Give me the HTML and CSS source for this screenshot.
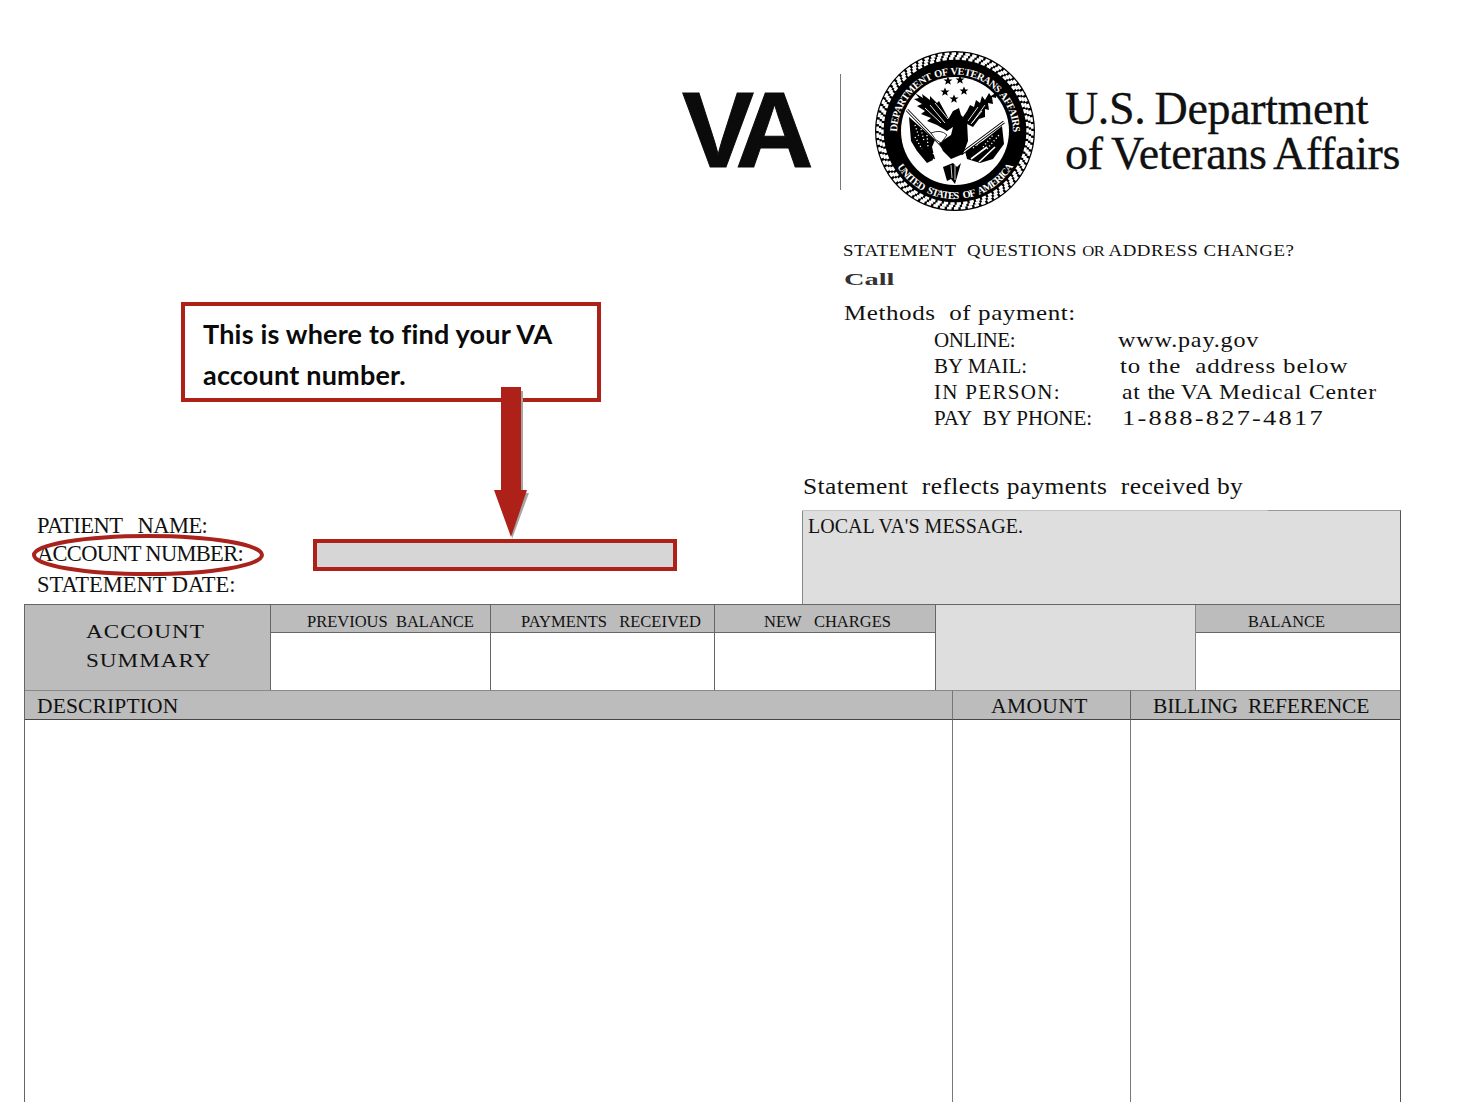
FILE: index.html
```html
<!DOCTYPE html>
<html>

<head>
    <meta charset="UTF-8">
    <title>VA statement: account number</title>
    <link rel="stylesheet" href="styles.css">
</head>

<body>
    <div class="page">
        <header class="letterhead">
            <div class="va-mark">VA</div>
            <div class="va-rule"></div>
            <svg class="seal" viewBox="0 0 160 160" width="160" height="160" role="img" aria-label="Seal">
                <defs>
                    <path id="arc-top" d="M25 100 A58 58 0 1 1 135 100" fill="none" />
                    <path id="arc-bottom" d="M12 80 A68 68 0 0 0 148 80" fill="none" />
                    <path id="star" d="M0 -4.6 L1.3 -1.4 4.5 -1.4 1.9 .6 2.8 3.8 0 1.9 -2.8 3.8 -1.9 .6 -4.5 -1.4 -1.3 -1.4Z" />
                </defs>
                <circle cx="80" cy="80" r="80" fill="#000" />
                <!-- rope: three rings of ticks, each a bit further round -->
                <circle class="rope" cx="80" cy="80" r="77.4" pathLength="490" />
                <circle class="rope" cx="80" cy="80" r="75" pathLength="490" stroke-dashoffset="1.5" />
                <circle class="rope" cx="80" cy="80" r="72.6" pathLength="490" stroke-dashoffset="3" />
                <circle cx="80" cy="80" r="54" fill="#fff" />
                <text class="seal-text seal-top"><textPath href="#arc-top" startOffset="50%" text-anchor="middle">DEPARTMENT OF VETERANS AFFAIRS</textPath></text>
                <text class="seal-text seal-bottom"><textPath href="#arc-bottom" startOffset="50%" text-anchor="middle">UNITED STATES OF AMERICA</textPath></text>
                <use href="#star" x="73" y="30" />
                <use href="#star" x="85" y="29" />
                <use href="#star" x="70" y="41" />
                <use href="#star" x="89" y="40" />
                <use href="#star" x="79" y="48" />
                <!-- wings -->
                <path d="M40 42 L48 47 L47 43 L55 49 L55 45 L62 52 L64 50 L76 72 L72 80 L62 74 L52 70 L56 67 L46 63 L50 60 L42 55 L47 53 L39 48 L44 47Z" />
                <path d="M122 41 L121 47 L117 46 L118 53 L113 52 L114 59 L110 58 L110 66 L104 68 L98 76 L90 72 L88 66 L92 60 L95 54 L99 56 L101 49 L105 52 L107 45 L110 49 L114 42 L116 45Z" />
                <path d="M55 54 L70 72 M60 52 L73 68 M50 57 L66 72 M103 56 L93 70 M110 54 L97 72 M107 60 L96 73" stroke="#fff" stroke-width=".9" fill="none" />
                <!-- flags -->
                <path d="M34 66 L60 89 L57 96 L60 108 L52 112 L42 100 L36 90Z" />
                <path d="M127 75 L129 93 L118 108 L105 112 L92 108 L90 100 L108 90Z" />
                <path d="M60 96 L76 110 M58 102 L72 114 M58 108 L68 116 M96 108 L112 96 M104 111 L120 96" stroke="#fff" stroke-width="1.6" fill="none" />
                <path d="M40 74 L44 86 M46 78 L49 90 M40 86 L47 98 M52 84 L53 96 M102 94 L110 86 M108 96 L118 84 M112 98 L124 84 M98 97 L106 90" stroke="#fff" stroke-width="1.3" stroke-dasharray="1.2 2.2" fill="none" />
                <!-- poles -->
                <path d="M32 59 L72 100 M129 71 L86 103" stroke="#000" stroke-width="3" fill="none" />
                <path d="M32 59 L72 100 M129 71 L86 103" stroke="#fff" stroke-width="1.2" fill="none" />
                <!-- body, tail -->
                <path d="M78 60 L84 57 L86 64 L92 70 L93 90 L88 103 L76 108 L68 100 L64 92 L76 84 L78 76 L72 80 L70 74Z" />
                <path d="M56 82 Q66 78 72 84 L66 92 Q60 90 56 82Z" fill="#fff" stroke="#000" stroke-width=".8" />
                <path d="M68 116 L78 112 L82 116 L86 112 L80 133 L76 128 L72 130Z" />
                <path d="M76 114 L77 127 M80 114 L80 129" stroke="#fff" stroke-width=".8" fill="none" />
            </svg>
            <div class="dept">
                <div>U.S. Department</div>
                <div>of Veterans Affairs</div>
            </div>
        </header>

        <div class="info">
            <div class="info-left">
                <div class="callout">
                    This is where to find your VA<br>account number.
                </div>
                <div class="patient">
                    <div class="patient-labels">
                        <div class="name-label">PATIENT&nbsp;&nbsp; NAME:</div>
                        <div class="account-label">ACCOUNT NUMBER:</div>
                        <div class="date-label">STATEMENT DATE:</div>
                    </div>
                    <div class="account-box"></div>
                </div>
            </div>

            <div class="info-right">
                <div class="questions">STATEMENT&nbsp; QUESTIONS <span class="small-or">OR</span> ADDRESS CHANGE?</div>
                <div class="call">Call</div>
                <div class="methods-title">Methods&nbsp; of payment:</div>
                <div class="methods">
                    <span>ONLINE:</span><span class="value value-online">www.pay.gov</span>
                    <span class="label-mail">BY MAIL:</span><span class="value value-mail">to the&nbsp; address below</span>
                    <span class="label-person">IN PERSON:</span><span class="value value-person">at <span class="thin">the</span> VA Medical Center</span>
                    <span class="label-phone">PAY&nbsp; BY PHONE:</span><span class="value value-phone">1-888-827-4817</span>
                </div>
                <div class="reflects">Statement&nbsp; reflects payments&nbsp; received by</div>
                <div class="message">LOCAL VA'S MESSAGE.</div>
            </div>
        </div>

        <div class="summary">
            <div class="sum-title"><div class="sum-words">ACCOUNT<br>SUMMARY</div></div>
            <div class="sum-head sum-prev">PREVIOUS&nbsp; BALANCE</div>
            <div class="sum-head sum-pay">PAYMENTS&nbsp;&nbsp; RECEIVED</div>
            <div class="sum-head sum-new">NEW&nbsp;&nbsp; CHARGES</div>
            <div class="sum-blank"></div>
            <div class="sum-head sum-bal">BALANCE</div>
            <div class="sum-cell"></div>
            <div class="sum-cell"></div>
            <div class="sum-cell"></div>
            <div class="sum-cell sum-last"></div>
        </div>

        <div class="detail">
            <div class="detail-head detail-desc">DESCRIPTION</div>
            <div class="detail-head detail-amount">AMOUNT</div>
            <div class="detail-head detail-ref">BILLING&nbsp; REFERENCE</div>
            <div class="detail-col"></div>
            <div class="detail-col"></div>
            <div class="detail-col"></div>
        </div>

        <!-- red markup over the statement -->
        <svg class="ring" viewBox="0 0 236 44" width="236" height="44">
            <ellipse cx="118" cy="22" rx="114" ry="19" fill="none" stroke="#a9221c" stroke-width="4" />
        </svg>
        <svg class="arrow" viewBox="0 0 40 156" width="40" height="156">
            <path d="M10 4 H30 V106 H36 L19 152Z" fill="#a8a4a4" />
            <path d="M8 0 H28 V103 H34 L18 150 L1 103 H8Z" fill="#ae2118" />
        </svg>
    </div>
</body>

</html>
```

FILE: styles.css
```css
body {
    margin: 0;
    background: #fff;
    color: #111;
    font-family: "Liberation Serif", serif;
}

.page {
    position: relative;
    width: 1482px;
    height: 1102px;
    overflow: hidden;
}

.letterhead {
    display: flex;
    align-items: center;
    height: 212px;
    padding-top: 50px;
    padding-left: 682px;
    box-sizing: border-box;
}

.va-mark {
    width: 129px;
    margin-top: -2px;
    font-family: "Liberation Sans", sans-serif;
    font-size: 108px;
    font-weight: bold;
    letter-spacing: -10.5px;
    line-height: 108px;
    color: #0b0b0b;
    -webkit-text-stroke: 1px #0b0b0b;
}

.va-rule {
    width: 1px;
    height: 116px;
    margin-top: 2px;
    margin-left: 29px;
    background: #777;
}

.seal {
    margin-left: 34px;
    flex: none;
}

.rope {
    fill: none;
    stroke: #fff;
    stroke-width: 2.6;
    stroke-dasharray: 4.6 2.4;
}

.seal-text {
    font-family: "Liberation Serif", serif;
    font-size: 10.4px;
    font-weight: bold;
    fill: #fff;
}

.seal-top {
    letter-spacing: -.6px;
    word-spacing: 1px;
}

.seal-bottom {
    letter-spacing: -.9px;
    word-spacing: 3px;
}

.dept {
    margin-left: 30px;
    margin-top: 0;
    font-size: 46px;
    line-height: 45px;
    letter-spacing: -.35px;
    word-spacing: -2px;
    white-space: nowrap;
    color: #111;
    -webkit-text-stroke: .3px #111;
}

.info {
    display: flex;
    height: 392px;
}

.info-left {
    width: 802px;
    flex: none;
}

.callout {
    width: 420px;
    height: 100px;
    box-sizing: border-box;
    margin-top: 90px;
    margin-left: 181px;
    padding: 7px 0 0 18px;
    border: 4px solid #ae2118;
    font-family: Lato, sans-serif;
    font-size: 27px;
    font-weight: bold;
    line-height: 41px;
    letter-spacing: .2px;
    font-variant-ligatures: none;
    color: #0a0a0a;
}

.patient {
    display: flex;
    margin-top: 110px;
    padding-left: 37px;
}

.patient-labels {
    width: 276px;
    font-size: 22.5px;
    line-height: 28px;
    white-space: nowrap;
}

.name-label {
    letter-spacing: -.55px;
}

.account-label {
    letter-spacing: -.7px;
}

.date-label {
    margin-top: 3px;
    letter-spacing: 0;
}

.account-box {
    width: 364px;
    height: 32px;
    box-sizing: border-box;
    margin-top: 27px;
    border: 4px solid #ae2118;
    background: #d6d6d6;
}

.info-right {
    flex: 1;
    padding-top: 28px;
    font-size: 21px;
}

.questions {
    margin-left: 41px;
    font-size: 17px;
    line-height: 22px;
    letter-spacing: .5px;
    white-space: nowrap;
    transform: scaleX(1.11);
    transform-origin: left;
}

.small-or {
    font-size: 15px;
    letter-spacing: -.5px;
}

.call {
    width: 40px;
    margin-left: 42px;
    margin-top: 8px;
    font-size: 16.5px;
    font-weight: bold;
    line-height: 20px;
    color: #333;
    transform: scaleX(1.72);
    transform-origin: left;
}

.methods-title {
    margin-left: 42px;
    margin-top: 10px;
    font-size: 22px;
    line-height: 26px;
    letter-spacing: .5px;
    white-space: nowrap;
    transform: scaleX(1.138);
    transform-origin: left;
}

.methods {
    display: grid;
    grid-template-columns: 184px 1fr;
    margin-left: 132px;
    margin-top: 1px;
    line-height: 26px;
    letter-spacing: -.4px;
    white-space: nowrap;
}

.label-mail {
    letter-spacing: 0;
}

.label-person {
    letter-spacing: 1.3px;
}

.label-phone {
    letter-spacing: 0;
}

.value {
    font-size: 21.5px;
    letter-spacing: .75px;
    transform-origin: left;
}

.value-online {
    transform: scaleX(1.12);
}

.value-mail {
    margin-left: 2px;
    transform: scaleX(1.157);
}

.value-person {
    margin-left: 4px;
    transform: scaleX(1.1);
}

.value-phone {
    margin-left: 4px;
    letter-spacing: 1.8px;
    transform: scaleX(1.23);
}

.thin {
    letter-spacing: -.6px;
}

.reflects {
    margin-left: 1px;
    margin-top: 42px;
    font-size: 22.5px;
    line-height: 28px;
    letter-spacing: .35px;
    white-space: nowrap;
    transform: scaleX(1.131);
    transform-origin: left;
}

.message {
    position: relative;
    width: 599px;
    height: 94px;
    box-sizing: border-box;
    margin-top: 9px;
    padding: 3px 0 0 5px;
    border-left: 1px solid #888;
    border-right: 1px solid #555;
    border-top: 1px solid #999;
    background: #dedede;
    font-size: 20px;
    line-height: 24px;
}

.message::before {
    content: "";
    position: absolute;
    left: -1px;
    top: -1px;
    width: 466px;
    height: 1px;
    background: #c4c4c4;
}

.summary {
    display: grid;
    grid-template-columns: 245px 220px 224px 221px 261px 204px;
    grid-template-rows: 28px 57px;
    width: 1377px;
    margin-left: 24px;
    box-sizing: border-box;
    border-top: 1px solid #666;
    border-left: 1px solid #666;
    border-right: 1px solid #555;
}

.sum-title {
    grid-row: 1 / 3;
    padding: 12px 0 0 61px;
    background: #bcbcbc;
    font-size: 19px;
    line-height: 29px;
    letter-spacing: .8px;
}

.sum-words {
    transform: scaleX(1.22);
    transform-origin: left;
}

.sum-head {
    border-left: 1px solid #666;
    border-bottom: 1px solid #666;
    background: #bcbcbc;
    font-size: 16.5px;
    line-height: 34px;
    white-space: nowrap;
}

.sum-prev {
    padding-left: 36px;
}

.sum-pay {
    padding-left: 30px;
}

.sum-new {
    padding-left: 49px;
}

.sum-bal {
    padding-left: 52px;
    font-size: 16.3px;
}

.sum-blank {
    grid-column: 5;
    grid-row: 1 / 3;
    border-left: 1px solid #666;
    border-right: 1px solid #888;
    background: #dedede;
}

.sum-head.sum-bal {
    border-left: 0;
}

.sum-cell {
    border-left: 1px solid #666;
}

.sum-last {
    grid-column: 6;
    border-left: 0;
}

.detail {
    display: grid;
    grid-template-columns: 927px 178px 270px;
    grid-template-rows: 30px 382px;
    width: 1377px;
    margin-left: 24px;
    box-sizing: border-box;
    border-left: 1px solid #666;
    border-right: 1px solid #555;
}

.detail-head {
    border-top: 1px solid #888;
    border-bottom: 1px solid #444;
    background: #bcbcbc;
    font-size: 21.5px;
    line-height: 31px;
    white-space: nowrap;
}

.detail-desc {
    padding-left: 12px;
    letter-spacing: .15px;
}

.detail-amount {
    padding-left: 38px;
    border-left: 1px solid #777;
    letter-spacing: .4px;
}

.detail-ref {
    padding-left: 22px;
    border-left: 1px solid #666;
    letter-spacing: -.2px;
}

.detail-col + .detail-col {
    border-left: 1px solid #777;
}

.ring {
    position: absolute;
    left: 30px;
    top: 533px;
}

.arrow {
    position: absolute;
    left: 493px;
    top: 387px;
}
```
